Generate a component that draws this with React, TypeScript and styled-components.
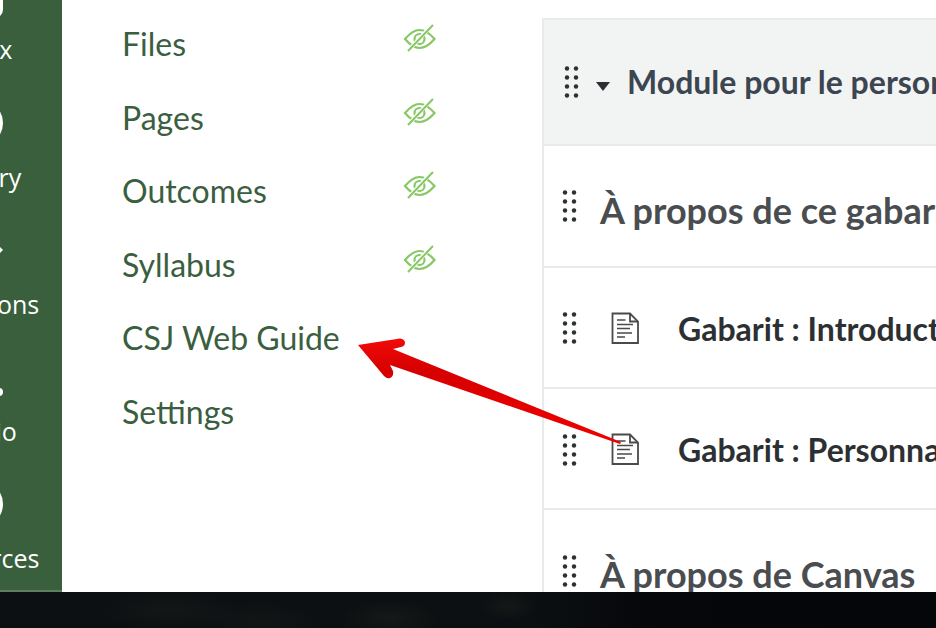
import React from 'react';
import styled, { createGlobalStyle } from 'styled-components';

const GlobalStyle = createGlobalStyle`
  html, body {
    margin: 0;
    padding: 0;
    background: #06080a;
  }
`;

const Page = styled.div`
  position: relative;
  width: 936px;
  height: 628px;
  overflow: hidden;
`;
const Window = styled.div`
  display: flex;
  height: 592px;
  overflow: hidden;
  background: white;
`;
const Footer = styled.div`
  height: 36px;
  background:
    radial-gradient(ellipse 28px 14px at 508px 14px, rgba(70, 70, 50, 0.14), transparent),
    radial-gradient(ellipse 50px 18px at 390px 26px, rgba(55, 58, 45, 0.2), transparent),
    radial-gradient(ellipse 70px 20px at 170px 18px, rgba(50, 52, 45, 0.18), transparent),
    radial-gradient(ellipse 60px 20px at 260px 30px, rgba(45, 50, 45, 0.16), transparent),
    linear-gradient(to right, #0d1012 0%, #0d1012 55%, #05070b 70%, #04060a 100%);
`;
const GlobalNav = styled.nav`
  flex: none;
  width: 62px;
  overflow: hidden;
  background-color: #3a5f3c;
  border-bottom: 2px solid #5f7f60;
  box-sizing: border-box;
`;
const GlobalNavList = styled.div`
  display: flex;
  flex-direction: column;
  margin-left: -82.500px;
  margin-top: -61px;
  width: 124px;
`;
const GlobalNavItem = styled.div`
  flex: none;
  display: flex;
  flex-direction: column;
  align-items: center;
  justify-content: flex-end;
  height: 127.300px;
`;
const GlobalNavIcon = styled.svg`
  flex: none;
  width: 46px;
  height: 46px;
  margin-bottom: 14px;
  fill: none;
  stroke: white;
  stroke-width: 3;
`;
const GlobalNavLabel = styled.span`
  font-family: 'Open Sans', sans-serif;
  font-size: 25px;
  line-height: 34px;
  color: white;
  white-space: nowrap;
`;
const CourseNav = styled.div`
  flex: none;
  width: 480px;
  padding-top: 7px;
  box-sizing: border-box;
`;
const CourseNavRow = styled.div`
  display: flex;
  align-items: flex-start;
  height: 73.500px;
  padding-left: 60px;
  box-sizing: border-box;
`;
const CourseNavLink = styled.a`
  flex: none;
  width: 281px;
  font-family: Lato, sans-serif;
  font-size: 32px;
  line-height: 73.500px;
  color: #3a5e40;
  white-space: nowrap;
`;
const HiddenIcon = styled.svg`
  flex: none;
  margin-top: 17px;
  width: 34px;
  height: 30px;
`;
const Modules = styled.div`
  flex: none;
  width: 500px;
  margin-top: 18px;
  border: solid #e8eaec;
  border-width: 2px 0 0 2px;
`;
const ModuleHeader = styled.div`
  display: flex;
  align-items: center;
  height: 124px;
  padding-left: 20px;
  background: #f2f4f4;
  border-bottom: 2px solid #e8eaec;
`;
const ModuleTitle = styled.span`
  margin-left: 17px;
  margin-bottom: 2px;
  font-family: Lato, sans-serif;
  font-weight: 700;
  font-size: 32px;
  color: #3c4550;
  white-space: nowrap;
`;
const Row = styled.div<{ $h: number }>`
  display: flex;
  align-items: center;
  height: ${(p) => p.$h}px;
  padding-left: 18px;
  border-bottom: 2px solid #e8eaec;
`;
const SubHeader = styled.span`
  margin-left: 23px;
  margin-top: 8px;
  font-family: Lato, sans-serif;
  font-weight: 700;
  font-size: 36px;
  color: #4a4d50;
  white-space: nowrap;
`;
const ItemTitle = styled.span`
  margin-left: 39px;
  margin-top: 2px;
  font-family: Lato, sans-serif;
  font-weight: 700;
  font-size: 32px;
  color: #2d3033;
  white-space: nowrap;
`;
const GripIcon = styled.svg<{ $shift?: number }>`
  flex: none;
  width: 15px;
  height: 36px;
  margin-top: ${(p) => p.$shift || 0}px;
  fill: #2d3033;
`;
const CaretIcon = styled.svg`
  flex: none;
  width: 14px;
  height: 9px;
  margin-left: 17px;
  margin-top: 9px;
  fill: #2d3033;
`;
const DocIcon = styled.svg`
  flex: none;
  margin-left: 34px;
  width: 28px;
  height: 32px;
`;
const Arrow = styled.svg`
  position: absolute;
  left: 0;
  top: 0;
  pointer-events: none;
`;

const Grip = ({ shift }: { shift?: number }) => (
  <GripIcon $shift={shift} viewBox="0 0 15 36">
    {[4.5, 13.5, 22.5, 31.5].map((y) => (
      <g key={y}>
        <circle cx="3" cy={y} r="2.2" />
        <circle cx="12" cy={y} r="2.2" />
      </g>
    ))}
  </GripIcon>
);

const Doc = () => (
  <DocIcon viewBox="0 0 28 32" fill="none" stroke="#4a4a4a" strokeWidth="1.8">
    <path d="M1.500 1.500H19L27 9.500V31H1.500z" />
    <path d="M19 1.500V9.500H27" />
    <path d="M6 8h8.500M6 12.500h16M6 16.500h13M6 21h15M6 25h8" strokeWidth="1.500" />
  </DocIcon>
);

const EyeOff = () => (
  <HiddenIcon viewBox="0 0 34 30" fill="none" stroke="#86c864" strokeWidth="2.200">
    <path d="M2 15C8 8 13 6 16.500 6s9 2 15 9c-6 7-11 9-15 9S8 22 2 15z" />
    <circle cx="16.500" cy="15" r="5" />
    <path d="M30 0 5 27" stroke="white" strokeWidth="4" />
    <path d="M30 1 5 27" strokeWidth="2" />
  </HiddenIcon>
);

const navIcons: Record<string, React.ReactNode> = {
  Inbox: <rect x="1.500" y="1.500" width="43" height="43" rx="7" />,
  History: <circle cx="23" cy="23" r="21.500" />,
  Commons: <path d="M46 23l-7-7v14z" fill="white" stroke="none" />,
  Studio: <circle cx="42" cy="38" r="4" fill="white" stroke="none" />,
  Resources: <circle cx="23" cy="23" r="21.500" />,
};

const globalItems = ['Inbox', 'History', 'Commons', 'Studio', 'Resources'];
const courseItems = [
  { label: 'Files', hidden: true },
  { label: 'Pages', hidden: true },
  { label: 'Outcomes', hidden: true },
  { label: 'Syllabus', hidden: true },
  { label: 'CSJ Web Guide', hidden: false },
  { label: 'Settings', hidden: false },
];

export default function App() {
  return (
    <Page>
      <GlobalStyle />
      <Window>
        <GlobalNav>
          <GlobalNavList>
            {globalItems.map((item) => (
              <GlobalNavItem key={item}>
                <GlobalNavIcon viewBox="0 0 46 46">{navIcons[item]}</GlobalNavIcon>
                <GlobalNavLabel>{item}</GlobalNavLabel>
              </GlobalNavItem>
            ))}
          </GlobalNavList>
        </GlobalNav>
        <CourseNav>
          {courseItems.map((item) => (
            <CourseNavRow key={item.label}>
              <CourseNavLink>{item.label}</CourseNavLink>
              {item.hidden && <EyeOff />}
            </CourseNavRow>
          ))}
        </CourseNav>
        <Modules>
          <ModuleHeader>
            <Grip />
            <CaretIcon viewBox="0 0 14 9">
              <path d="M0 0h14L7 9z" />
            </CaretIcon>
            <ModuleTitle>Module pour le personnel</ModuleTitle>
          </ModuleHeader>
          <Row $h={120}>
            <Grip />
            <SubHeader>À propos de ce gabarit</SubHeader>
          </Row>
          <Row $h={119}>
            <Grip />
            <Doc />
            <ItemTitle>Gabarit : Introduction</ItemTitle>
          </Row>
          <Row $h={119}>
            <Grip shift={3} />
            <Doc />
            <ItemTitle>Gabarit : Personnalisation</ItemTitle>
          </Row>
          <Row $h={119}>
            <Grip shift={3} />
            <SubHeader>À propos de Canvas</SubHeader>
          </Row>
        </Modules>
      </Window>
      <Footer />
      <Arrow width="936" height="628" viewBox="0 0 936 628">
        <defs>
          <linearGradient id="arrowRed" x1="0" y1="0" x2="0" y2="1">
            <stop offset="0" stopColor="#f20a0a" />
            <stop offset="0.3" stopColor="#d60000" />
            <stop offset="1" stopColor="#f00000" />
          </linearGradient>
        </defs>
        <path
          d="M358 345 L400 338.500 Q405 339 405 343 Q405 346 401 347 L393 349 L621 442 L620 444 L390 365 L393 371 Q394 376 390 378 Q387 379 384 376 Z"
          fill="url(#arrowRed)"
        />
      </Arrow>
    </Page>
  );
}
